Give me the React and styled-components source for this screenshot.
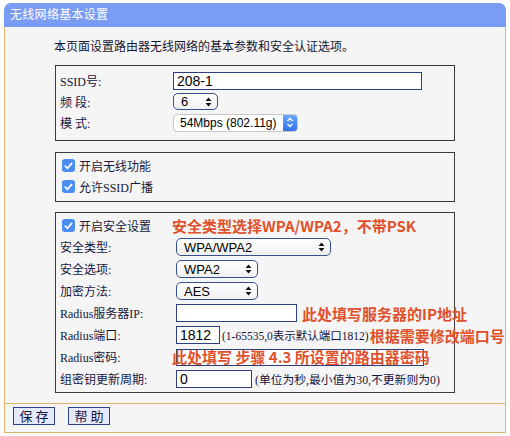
import React from "react";
import styled, { createGlobalStyle } from "styled-components";

const Global = createGlobalStyle`
  html, body { margin: 0; padding: 0; background: #ffffff; }
  body { font-family: "Liberation Serif", "Noto Sans CJK SC", serif; }
`;

const SERIF = `"Liberation Serif", "Noto Sans CJK SC", serif`;
const SANS = `"Liberation Sans", "Noto Sans CJK SC", sans-serif`;
const NOTE = `"Noto Sans CJK SC", "Liberation Sans", sans-serif`;

const Panel = styled.div`
  margin: 3px 0 0 4px;
  width: 502px;
  box-sizing: border-box;
`;

const Header = styled.div`
  height: 24px;
  line-height: 24px;
  background: #7b9cf5;
  border-radius: 7px 7px 0 0;
  color: #ffffff;
  font-family: ${SERIF};
  font-size: 12px;
  padding-left: 6px;
  letter-spacing: 0.3px;
`;

const Body = styled.div`
  background: #f5f5f5;
  border-left: 1px solid #e2b46a;
  border-right: 1px solid #e2b46a;
  padding: 12px 0 10px 50px;
`;

const Intro = styled.div`
  font-family: ${SERIF};
  font-size: 12px;
  line-height: 16px;
  color: #151530;
  margin: 0 0 10px -1px;
`;

const Box = styled.div`
  width: 400px;
  box-sizing: border-box;
  border: 1px solid #3a3a3a;
  padding: ${(p) => p.$pt}px 0 ${(p) => p.$pb}px 4px;
  margin-bottom: ${(p) => p.$mb || 0}px;
`;

const Row = styled.div`
  display: flex;
  align-items: center;
  height: ${(p) => p.$h || 22}px;
  position: relative;
`;

const Label = styled.div`
  width: ${(p) => p.$w}px;
  flex-shrink: 0;
  font-family: ${SERIF};
  font-size: 12px;
  color: #16163e;
  white-space: nowrap;
`;

const TextInput = styled.div`
  width: ${(p) => p.$w}px;
  height: ${(p) => p.$h || 18}px;
  box-sizing: border-box;
  border: 1px solid #2d3f7c;
  background: #ffffff;
  font-family: ${SANS};
  font-size: 14px;
  line-height: 16px;
  padding-left: 3px;
  color: #000;
  flex-shrink: 0;
`;

const SelectBox = styled.div`
  width: ${(p) => p.$w}px;
  height: ${(p) => p.$h || 18}px;
  box-sizing: border-box;
  border: 1px solid #34508f;
  border-radius: 5px;
  background: linear-gradient(#ffffff, #f0f0f0);
  display: flex;
  align-items: center;
  justify-content: space-between;
  padding: 0 5px 0 7px;
  font-family: ${SANS};
  font-size: 13px;
  color: #000;
  flex-shrink: 0;
`;

const ModeSelect = styled.div`
  width: ${(p) => p.$w}px;
  height: 18px;
  box-sizing: border-box;
  border: 1px solid #c8c8c8;
  border-radius: 4px;
  background: #ffffff;
  display: flex;
  align-items: stretch;
  font-family: ${SANS};
  font-size: 12px;
  color: #000;
  overflow: hidden;
  flex-shrink: 0;
`;

const ModeText = styled.div`
  flex: 1;
  display: flex;
  align-items: center;
  padding-left: 6px;
  white-space: nowrap;
`;

const ModeButton = styled.div`
  width: 14px;
  background: linear-gradient(#6aaafc, #2f72ec);
  display: flex;
  align-items: center;
  justify-content: center;
`;

const CheckRow = styled.div`
  display: flex;
  align-items: center;
  height: ${(p) => p.$h || 21}px;
  gap: 4px;
  padding-left: 2px;
  position: relative;
`;

const Check = styled.span`
  width: 13px;
  height: 13px;
  border-radius: 3px;
  background: #4a8df3;
  display: inline-flex;
  align-items: center;
  justify-content: center;
  flex-shrink: 0;
`;

const CheckLabel = styled.span`
  font-family: ${SERIF};
  font-size: 12px;
  color: #1a1a38;
`;

const Note = styled.span`
  font-family: ${NOTE};
  font-weight: 700;
  font-size: 15px;
  color: #e0512b;
  white-space: nowrap;
  margin-left: ${(p) => p.$ml || 0}px;
`;

const NoteOver = styled.span`
  position: absolute;
  left: ${(p) => p.$left}px;
  top: 50%;
  transform: translateY(-52%);
  font-family: ${NOTE};
  font-weight: 700;
  font-size: 15px;
  color: #e0512b;
  white-space: nowrap;
`;

const Hint = styled.span`
  font-family: ${SERIF};
  font-size: ${(p) => p.$fs || 11}px;
  color: #16163e;
  white-space: nowrap;
  margin-left: ${(p) => p.$ml || 0}px;
`;

const Footer = styled.div`
  background: #f5f5f5;
  border: 1px solid #e2b46a;
  height: 25px;
  box-sizing: content-box;
  display: flex;
  align-items: flex-start;
  padding: 3px 0 0 8px;
  gap: 13px;
`;

const Button = styled.div`
  width: 42px;
  height: 18px;
  box-sizing: border-box;
  border: 1px solid #2e3f82;
  background: #e4e9fb;
  font-family: ${NOTE};
  font-size: 13px;
  line-height: 16px;
  text-align: center;
  letter-spacing: 3px;
  padding-left: 3px;
  color: #16163e;
`;

const Arrows = () => (
  <svg width="7" height="10" viewBox="0 0 7 10">
    <path d="M3.5 0.5 L6.5 4 L0.5 4 Z" fill="#111" />
    <path d="M0.5 6 L6.5 6 L3.5 9.5 Z" fill="#111" />
  </svg>
);

const Chevrons = () => (
  <svg width="8" height="11" viewBox="0 0 8 11">
    <path d="M1.5 4 L4 1.5 L6.5 4" stroke="#fff" strokeWidth="1.3" fill="none" />
    <path d="M1.5 7 L4 9.5 L6.5 7" stroke="#fff" strokeWidth="1.3" fill="none" />
  </svg>
);

const Tick = () => (
  <svg width="9" height="8" viewBox="0 0 9 8">
    <path d="M1.3 4.2 L3.5 6.3 L7.7 1.4" stroke="#fff" strokeWidth="1.7" fill="none" strokeLinecap="round" strokeLinejoin="round" />
  </svg>
);

export default function App() {
  return (
    <>
      <Global />
      <Panel>
        <Header>无线网络基本设置</Header>
        <Body>
          <Intro>本页面设置路由器无线网络的基本参数和安全认证选项。</Intro>

          <Box $pt={4} $pb={7} $mb={11}>
            <Row $h={21}>
              <Label $w={113}>SSID号:</Label>
              <TextInput $w={249}>208-1</TextInput>
            </Row>
            <Row $h={21}>
              <Label $w={113}>频 段:</Label>
              <SelectBox $w={45} $h={17}>
                <span>6</span>
                <Arrows />
              </SelectBox>
            </Row>
            <Row $h={21}>
              <Label $w={113}>模 式:</Label>
              <ModeSelect $w={125}>
                <ModeText>54Mbps (802.11g)</ModeText>
                <ModeButton>
                  <Chevrons />
                </ModeButton>
              </ModeSelect>
            </Row>
          </Box>

          <Box $pt={2} $pb={4} $mb={10}>
            <CheckRow>
              <Check><Tick /></Check>
              <CheckLabel>开启无线功能</CheckLabel>
            </CheckRow>
            <CheckRow>
              <Check><Tick /></Check>
              <CheckLabel>允许SSID广播</CheckLabel>
            </CheckRow>
          </Box>

          <Box $pt={2} $pb={2}>
            <CheckRow $h={21}>
              <Check><Tick /></Check>
              <CheckLabel>开启安全设置</CheckLabel>
              <NoteOver $left={112}>安全类型选择WPA/WPA2，不带PSK</NoteOver>
            </CheckRow>
            <Row>
              <Label $w={116}>安全类型:</Label>
              <SelectBox $w={155}>
                <span>WPA/WPA2</span>
                <Arrows />
              </SelectBox>
            </Row>
            <Row>
              <Label $w={116}>安全选项:</Label>
              <SelectBox $w={82}>
                <span>WPA2</span>
                <Arrows />
              </SelectBox>
            </Row>
            <Row>
              <Label $w={116}>加密方法:</Label>
              <SelectBox $w={82}>
                <span>AES</span>
                <Arrows />
              </SelectBox>
            </Row>
            <Row>
              <Label $w={116}>Radius服务器IP:</Label>
              <TextInput $w={121} />
              <Note $ml={5}>此处填写服务器的IP地址</Note>
            </Row>
            <Row>
              <Label $w={116}>Radius端口:</Label>
              <TextInput $w={44}>1812</TextInput>
              <Hint $ml={2} $fs={11.5}>(1-65535,0表示默认端口1812)</Hint>
              <Note $ml={1}>根据需要修改端口号</Note>
            </Row>
            <Row>
              <Label $w={116}>Radius密码:</Label>
              <TextInput $w={248} $h={17} />
              <NoteOver $left={112}>此处填写 步骤 4.3 所设置的路由器密码</NoteOver>
            </Row>
            <Row>
              <Label $w={116}>组密钥更新周期:</Label>
              <TextInput $w={76}>0</TextInput>
              <Hint $ml={3} $fs={11.8}>(单位为秒,最小值为30,不更新则为0)</Hint>
            </Row>
          </Box>
        </Body>
        <Footer>
          <Button>保存</Button>
          <Button>帮助</Button>
        </Footer>
      </Panel>
    </>
  );
}
